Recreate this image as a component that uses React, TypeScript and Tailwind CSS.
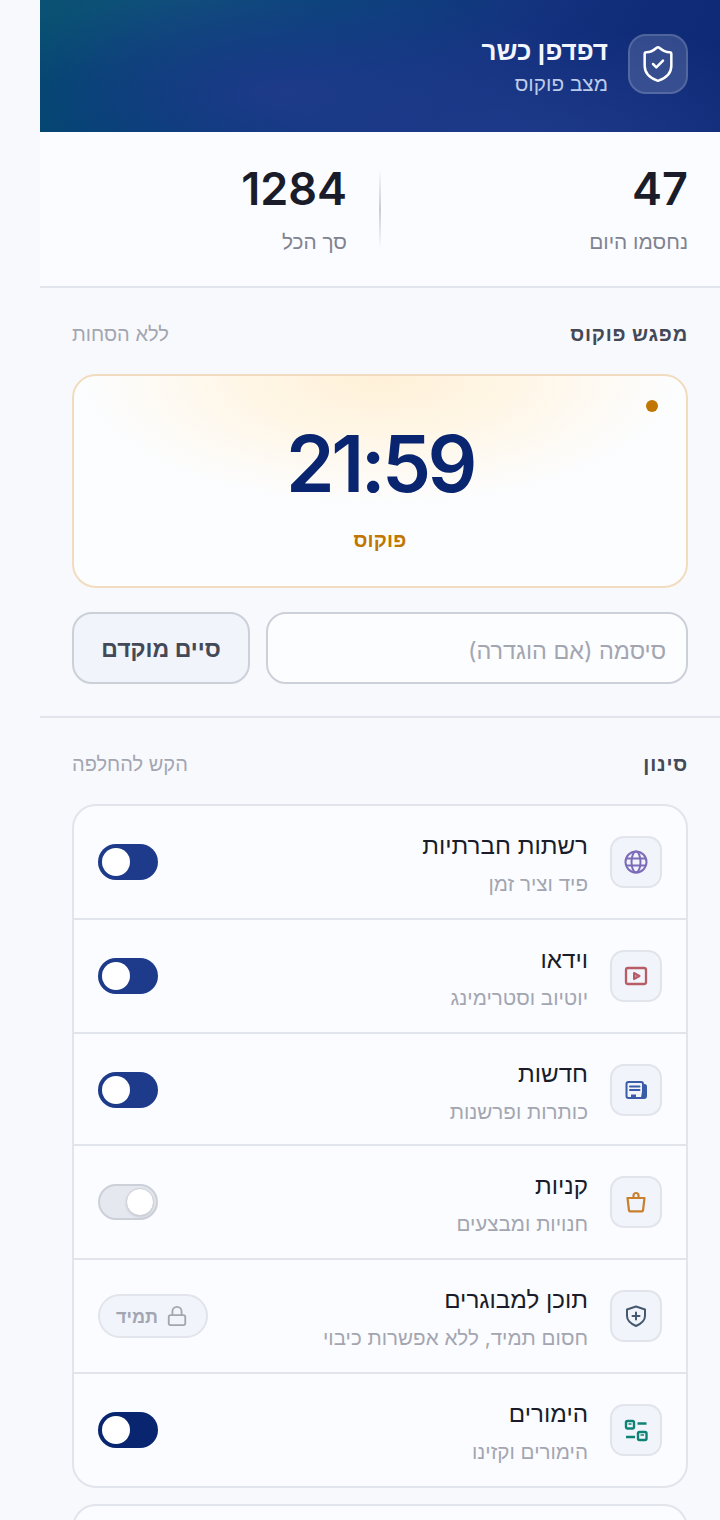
import { Lock, ShieldCheck } from "lucide-react";
import type { ReactNode } from "react";

const GlobeIcon = () => (
  <svg width="24" height="24" viewBox="0 0 24 24" fill="none" stroke="#7c6bb8" strokeWidth="2">
    <circle cx="12" cy="12" r="10.500" />
    <ellipse cx="12" cy="12" rx="4.500" ry="10.500" />
    <path d="M2.800 8.500h18.400M2.800 15.500h18.400" />
  </svg>
);

const VideoIcon = () => (
  <svg width="24" height="24" viewBox="0 0 24 24" fill="none" stroke="#b85c66" strokeWidth="2.300" strokeLinejoin="round">
    <rect x="2" y="4" width="20" height="16" rx="2" />
    <path d="M10 9 15.500 12 10 15Z" fill="#b85c66" fillOpacity="0.6" strokeWidth="2" />
  </svg>
);

const NewsIcon = () => (
  <svg width="24" height="24" viewBox="0 0 24 24" fill="none" stroke="#3a5ba8" strokeWidth="2" strokeLinejoin="round" strokeLinecap="round">
    <path d="M19 7h1.500A1.500 1.500 0 0 1 22 8.500V18a2 2 0 0 1-2 2h-3" fill="#3a5ba8" />
    <rect x="2.500" y="4" width="16.500" height="16" rx="2" />
    <path d="M6 8.500h9.500M6 12h9.500" />
    <path d="M7 18h5" strokeWidth="3" strokeLinecap="butt" />
  </svg>
);

const BagIcon = () => (
  <svg width="24" height="24" viewBox="0 0 24 24" fill="none" stroke="#c8802f" strokeWidth="2.200" strokeLinejoin="round">
    <path d="M3.500 8h17l-1.500 12.400a1 1 0 0 1-1 .9H6a1 1 0 0 1-1-.9L3.500 8Z" />
    <path d="M9.500 8V5.500a2.500 2.500 0 0 1 5 0V8" />
  </svg>
);

const ShieldPlusIcon = () => (
  <svg width="24" height="24" viewBox="0 0 24 24" fill="none" stroke="#46586f" strokeWidth="2" strokeLinejoin="round" strokeLinecap="round">
    <path d="M12 2.500 21 5.500V12c0 5-4.500 8-9 10-4.500-2-9-5-9-10V5.500Z" />
    <path d="M12 8.500v7M8.500 12h7" />
  </svg>
);

const GamesIcon = () => (
  <svg width="24" height="24" viewBox="0 0 24 24" fill="none" stroke="#0f8276" strokeWidth="2.400">
    <rect x="2" y="3" width="8" height="7.500" rx="1.500" />
    <rect x="14" y="14" width="8.500" height="8" rx="1.500" />
    <path d="M13.500 5.500h9M2 19h9" />
    <path d="M4.500 6h3M16.500 17h3.500" strokeWidth="1.300" />
  </svg>
);

type RowProps = {
  icon: ReactNode;
  title: string;
  desc: string;
  right: ReactNode;
  h?: string;
};

const Toggle = ({ on = true, color = "bg-[#1e3a8a]" }: { on?: boolean; color?: string }) =>
  on ? (
    <div className={`flex h-9 w-[60px] items-center justify-end rounded-full px-1 ${color}`} dir="rtl">
      <div className="order-last size-7 rounded-full bg-white" />
    </div>
  ) : (
    <div className="flex h-9 w-[60px] items-center rounded-full border-2 border-[#ccd0d8] bg-[#e5e8ef] pr-0.5" dir="rtl">
      <div className="size-7 rounded-full border border-[#ccd0d8] bg-white shadow-sm" />
    </div>
  );

const Row = ({ icon, title, desc, right, h = "h-[114px]" }: RowProps) => (
  <div className={`flex items-center border-b-2 border-[#e2e4ec] px-6 last:border-b-0 ${h}`}>
    <div className="flex size-[52px] shrink-0 items-center justify-center rounded-[14px] border-2 border-[#e2e4ec] bg-[#f1f4fb]">
      {icon}
    </div>
    <div className="mr-[22px] flex-1 pt-0.5">
      <p className="text-[24.2px] leading-9 text-[#1a1d29]">{title}</p>
      <p className="mt-1.5 text-[20.6px] leading-7 text-[#a3a6b1]">{desc}</p>
    </div>
    {right}
  </div>
);

export default function App() {
  return (
    <div dir="rtl" className="h-[1520px] overflow-hidden bg-[#f8f9fd] font-['Inter','Noto_Sans',sans-serif]">
      <div className="ml-10">
        <header className="flex h-[132px] items-center bg-[radial-gradient(ellipse_300px_110px_at_36%_70%,#1e3a8a_0%,transparent_100%),radial-gradient(ellipse_340px_120px_at_70%_110%,#1e3a8a_0%,transparent_100%),radial-gradient(ellipse_420px_90px_at_22%_0%,rgba(60,110,150,0.25)_0%,transparent_100%),linear-gradient(120deg,#004c6c_0%,#003c76_38%,#12307e_65%,#0e2874_100%)] px-8">
          <div className="-mt-1 flex size-[60px] items-center justify-center rounded-[18px] border-2 border-white/15 bg-white/15">
            <ShieldCheck size={40} strokeWidth={1.500} className="text-white" />
          </div>
          <div className="mr-5">
            <p className="text-[26px] leading-8 font-bold text-[#f4f6ff]">דפדפן כשר</p>
            <p className="mt-[3px] text-[20.8px] leading-7 text-[#bccbe8]">מצב פוקוס</p>
          </div>
        </header>

        <section className="flex h-[156px] items-center gap-8 border-b-2 border-[#e2e4ec] bg-[#fbfcff] px-8">
          <div className="flex-1">
            <p className="text-[45px] leading-[52px] font-semibold text-[#1a1d29]">47</p>
            <p className="mt-[13px] text-[20.8px] leading-7 text-[#80838f]">נחסמו היום</p>
          </div>
          <div className="h-20 w-0.5 bg-gradient-to-b from-transparent via-[#c9ccd6] to-transparent" />
          <div className="flex-1">
            <p className="text-[45px] leading-[52px] font-semibold text-[#1a1d29]">1284</p>
            <p className="mt-[13px] text-[20.8px] leading-7 text-[#80838f]">סך הכל</p>
          </div>
        </section>

        <section className="border-b-2 border-[#e2e4ec] px-8 pt-8 pb-8">
          <div className="flex items-center justify-between">
            <p className="text-[20px] leading-7 font-bold tracking-[0.8px] text-[#444957]">מפגש פוקוס</p>
            <p className="text-[20px] leading-7 text-[#a3a6b1]">ללא הסחות</p>
          </div>
          <div className="relative mt-[26px] flex h-[214px] flex-col items-center overflow-hidden rounded-3xl border-2 border-[#f2dcc0] bg-[#fcfdff] bg-[radial-gradient(ellipse_300px_130px_at_50%_0%,#fff1d8_0%,#fff6e6_45%,#fcfdff_100%)]">
            <div className="absolute top-6 right-7 size-3 rounded-full bg-[#c07600]" />
            <p dir="ltr" className="mt-11 text-[78px] leading-[88px] font-semibold tracking-[-3.500px] text-[#0a2570]">21:59</p>
            <p className="mt-[18px] text-[20px] leading-7 font-bold tracking-[0.2px] text-[#c07600]">פוקוס</p>
          </div>
          <div className="mt-6 flex gap-4">
            <input
              placeholder="סיסמה (אם הוגדרה)"
              className="h-[72px] min-w-0 flex-1 rounded-[20px] border-2 border-[#ccd0d8] bg-[#fcfdff] px-5 pt-1 text-[23.4px] outline-none placeholder:text-[#a3a6b1]"
            />
            <button className="h-[72px] w-[178px] rounded-[20px] border-2 border-[#ccd0d8] bg-[#f1f4fb] pt-0.5 text-[23px] font-bold text-[#444957]">
              סיים מוקדם
            </button>
          </div>
        </section>

        <section className="px-8 pt-8">
          <div className="flex items-center justify-between">
            <p className="text-[20px] leading-7 font-bold tracking-[0.8px] text-[#444957]">סינון</p>
            <p className="text-[20px] leading-7 text-[#a3a6b1]">הקש להחלפה</p>
          </div>
          <div className="mt-[26px] overflow-hidden rounded-3xl border-2 border-[#e2e4ec] bg-[#fbfcff]">
            <Row icon={<GlobeIcon />} title="רשתות חברתיות" desc="פיד וציר זמן" right={<Toggle />} />
            <Row icon={<VideoIcon />} title="וידאו" desc="יוטיוב וסטרימינג" right={<Toggle />} />
            <Row icon={<NewsIcon />} title="חדשות" desc="כותרות ופרשנות" right={<Toggle />} h="h-[112px] pt-px" />
            <Row icon={<BagIcon />} title="קניות" desc="חנויות ומבצעים" right={<Toggle on={false} />} />
            <Row
              icon={<ShieldPlusIcon />}
              title="תוכן למבוגרים"
              desc="חסום תמיד, ללא אפשרות כיבוי"
              right={
                <div className="flex h-11 items-center gap-2 rounded-full border-2 border-[#e2e4ec] bg-[#f1f4fb] pr-[18px] pl-4">
                  <Lock size={22} strokeWidth={2} className="text-[#a3a6b1]" />
                  <span className="text-[18px] font-bold text-[#a3a6b1]">תמיד</span>
                </div>
              }
            />
            <Row
              icon={<GamesIcon />}
              title="הימורים"
              desc="הימורים וקזינו"
              right={<Toggle color="bg-[#0a2570]" />}
              h="h-[112px]"
            />
          </div>
          <div className="mt-4 h-[200px] rounded-3xl border-2 border-[#e2e4ec] bg-[#fbfcff]" />
        </section>
      </div>
    </div>
  );
}
